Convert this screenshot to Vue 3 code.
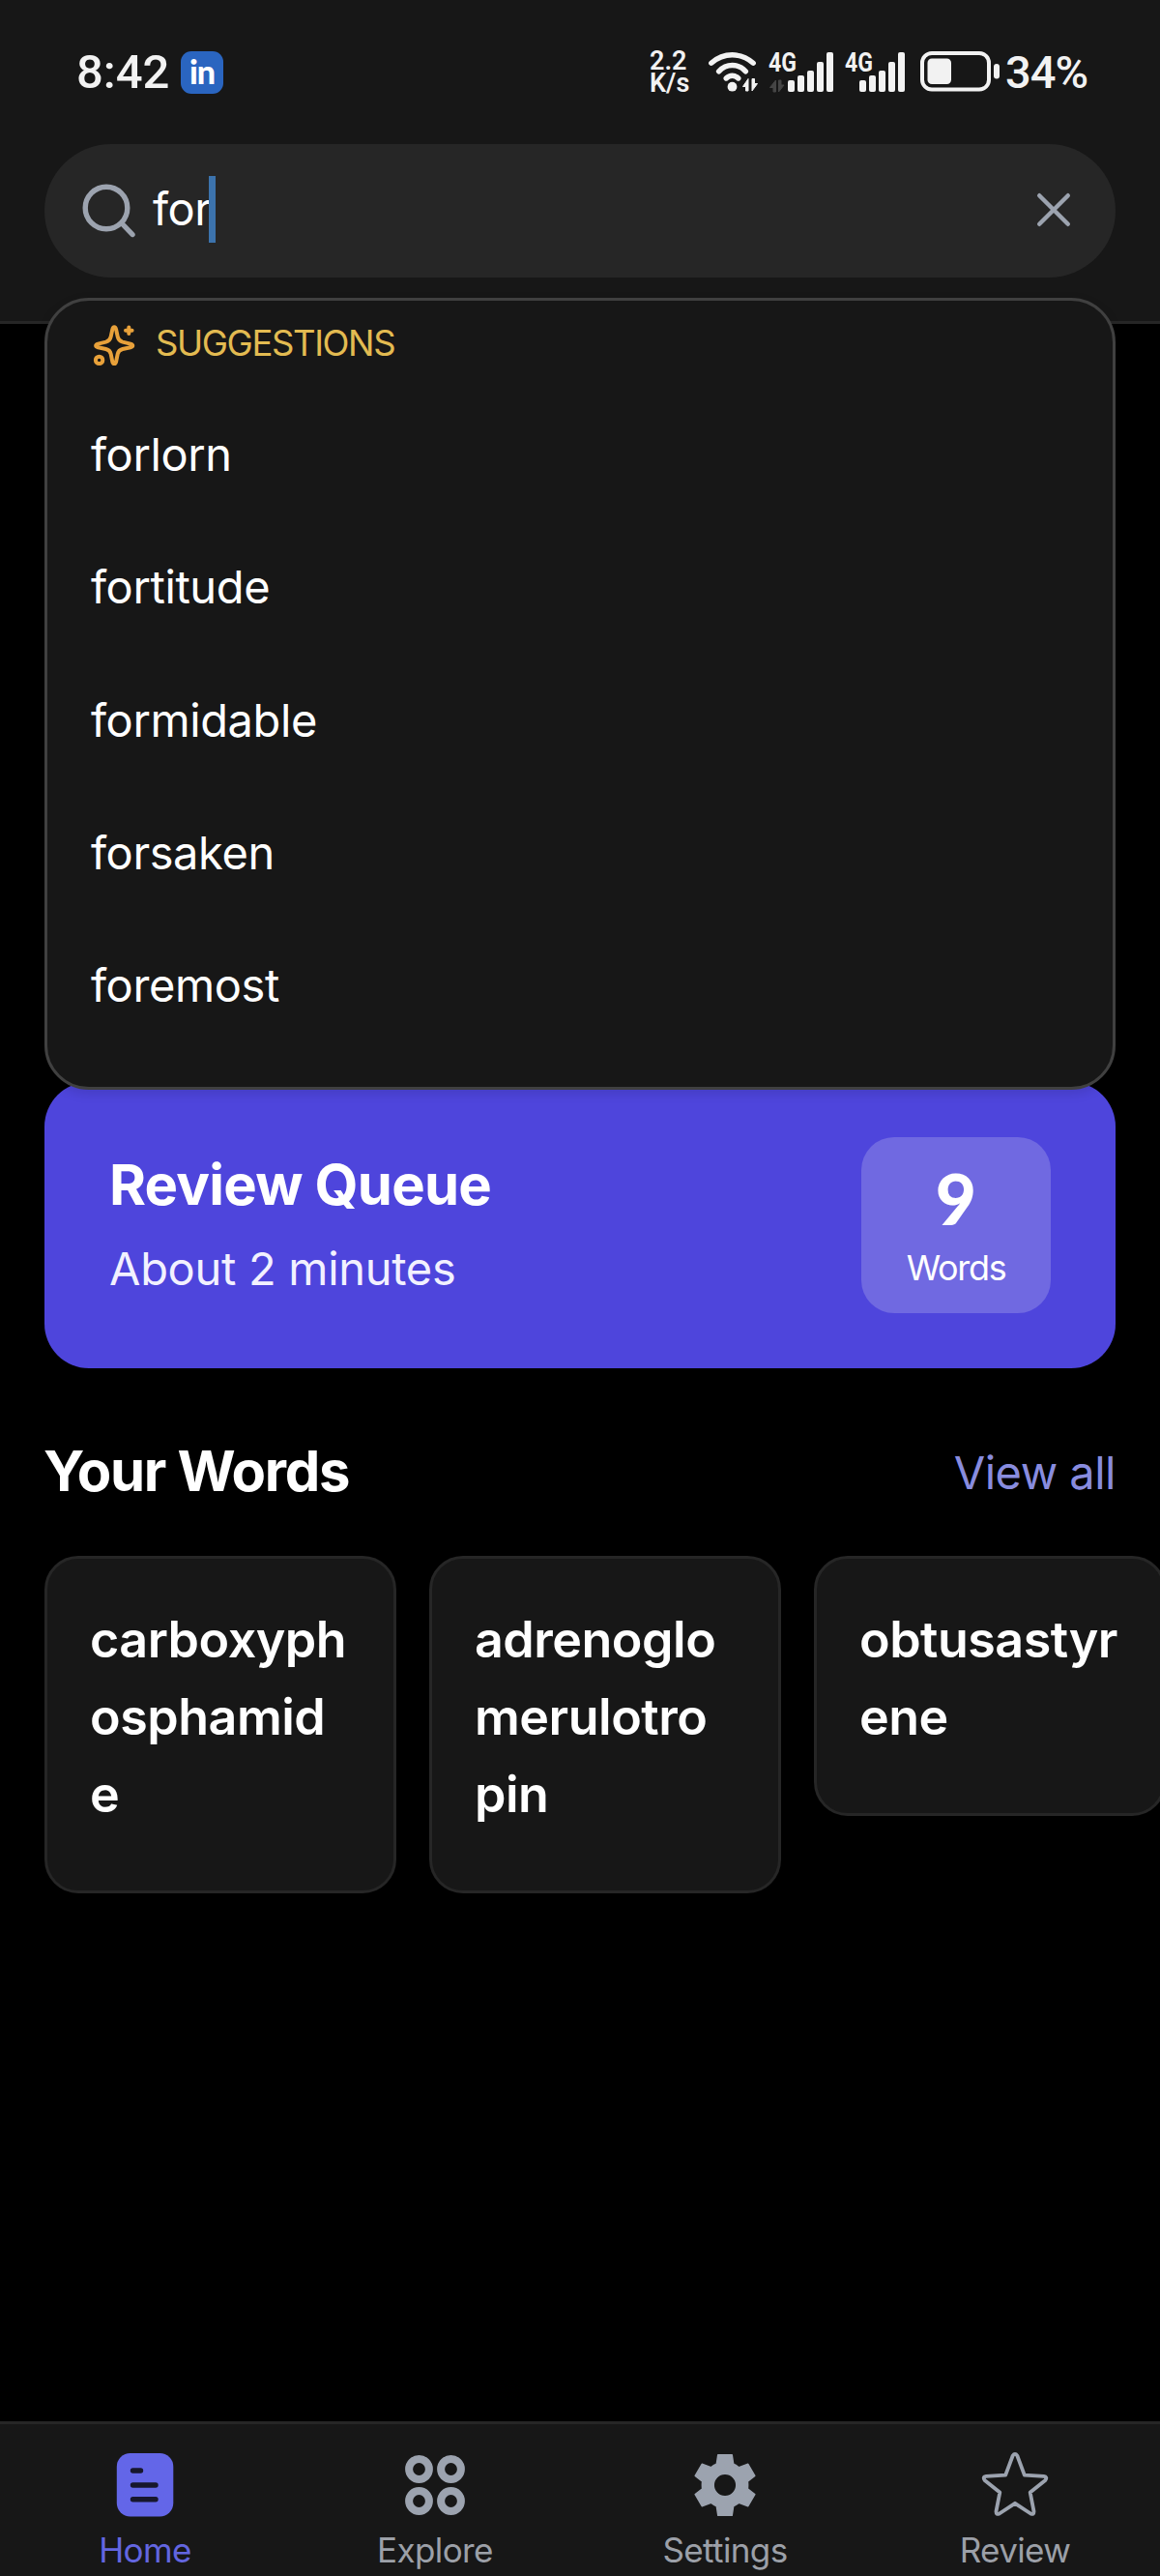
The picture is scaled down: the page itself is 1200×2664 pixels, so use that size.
<template>
  <div class="screen">
    <header class="header">
      <div class="status-bar">
        <span class="clock">8:42</span>
        <span class="linkedin">in</span>

        <div class="speed">
          <span>2.2</span>
          <span>K/s</span>
        </div>

        <svg class="wifi" width="52" height="44" viewBox="0 0 52 44">
          <g fill="none" stroke="#f2f2f2" stroke-width="5.4" stroke-linecap="round">
            <path d="M2.8 12.2Q12.5 3.8 24.5 3.8T46.2 12.2" />
            <path d="M10.6 20.8Q16.5 14.5 24.5 14.5T38.4 20.8" />
            <path d="M18.2 28Q21 25.2 24.5 25.2T30.8 28" />
          </g>
          <circle cx="24.5" cy="36.7" r="4.9" fill="#f2f2f2" />
          <path d="M41 28.5V41H38.5V36.5H35.5zM45 41V28.5H47.5V33.5H50.5z" fill="#f2f2f2" stroke="#f2f2f2" stroke-linejoin="round" />
        </svg>

        <svg class="signal" width="67" height="44" viewBox="0 0 67 44">
          <text x="0" y="21.3" textLength="29" lengthAdjust="spacingAndGlyphs">4G</text>
          <path d="M7.5 30V42H5V37.5H1.5zM10.5 42V30H13V35H16z" fill="#454545" stroke="#454545" stroke-linejoin="round" />
          <rect v-for="(bar, i) in bars" :key="i" :x="20 + i * 10" :y="bar" width="7" :height="42 - bar" rx="2" />
        </svg>

        <svg class="signal second" width="62" height="44" viewBox="0 0 62 44">
          <text x="0" y="21.3" textLength="29" lengthAdjust="spacingAndGlyphs">4G</text>
          <rect v-for="(bar, i) in bars" :key="i" :x="15 + i * 10" :y="bar" width="7" :height="42 - bar" rx="2" />
        </svg>

        <svg class="battery" width="83" height="44" viewBox="0 0 83 44">
          <rect x="2" y="2" width="69" height="37.5" rx="10" fill="none" stroke="#f2f2f2" stroke-width="4" />
          <rect x="7.5" y="7.5" width="24.5" height="26.5" rx="4.5" fill="#f2f2f2" />
          <rect x="76" y="13" width="6" height="15.5" rx="3" fill="#f2f2f2" />
        </svg>
        <span class="percent">34%</span>
      </div>

      <div class="search-wrap">
        <div class="search">
          <svg width="56" height="56" viewBox="0 0 56 56" fill="none" stroke="#9ca3af" stroke-width="5.4" stroke-linecap="round">
            <circle cx="25" cy="25" r="21.8" />
            <path d="M41 41 52 52.5" />
          </svg>
          <span class="query">{{ query }}</span>
          <span class="caret"></span>
          <svg class="clear" width="34" height="34" viewBox="0 0 34 34" fill="none" stroke="#9ca3af" stroke-width="4.4" stroke-linecap="round">
            <path d="M2.2 2.2 31.8 31.8M31.8 2.2 2.2 31.8" />
          </svg>
        </div>

        <div class="dropdown">
          <div class="dropdown-title">
            <svg width="42" height="42" viewBox="0 0 42 42" fill="none" stroke="#e8a13a" stroke-width="4" stroke-linecap="round" stroke-linejoin="round">
              <path d="M21.2 2.2C20 2.2 19.6 3.3 19.3 4.6L17.7 12.2C17.1 15 15.4 16.8 12.6 17.6L4.4 19.6C1.4 20.4 1.4 22.4 4.4 23.2L12.6 25C15.4 25.7 17.1 27.4 17.7 30.2L19.3 38C19.9 40.8 22.5 40.8 23.1 38L24.7 30.2C25.3 27.4 27 25.7 29.8 25L38 23.2C41 22.4 41 20.4 38 19.6L29.8 17.6C27 16.8 25.3 15 24.7 12.2L23.1 4.6C22.8 3.3 22.4 2.2 21.2 2.2Z" />
              <path d="M36.3 2.5V9M33 5.8H39.6" />
              <circle cx="5.6" cy="36.4" r="3.7" />
            </svg>
            <span>SUGGESTIONS</span>
          </div>
          <ul>
            <li v-for="item in suggestions" :key="item">{{ item }}</li>
          </ul>
        </div>
      </div>
    </header>

    <main class="content">
      <section class="review-card">
        <div class="review-info">
          <h2>Review Queue</h2>
          <p>About 2 minutes</p>
        </div>
        <div class="review-count">
          <strong>9</strong>
          <span>Words</span>
        </div>
      </section>

      <div class="section-head">
        <h2>Your Words</h2>
        <a class="view-all">View all</a>
      </div>

      <div class="word-list">
        <article v-for="word in words" :key="word" class="word-card">{{ word }}</article>
      </div>
    </main>

    <nav class="tab-bar">
      <div class="tab active">
        <svg width="64" height="66" viewBox="0 0 64 66">
          <rect x="2.8" y="0" width="58.5" height="65.5" rx="14" fill="#6366e8" />
          <path d="M19.5 18H27.5M19.5 33H43M19.5 47.8H43" stroke="#17172d" stroke-width="5.4" stroke-linecap="round" />
        </svg>
        <span>Home</span>
      </div>
      <div class="tab">
        <svg width="64" height="66" viewBox="0 0 64 66" fill="none" stroke="#9ca3af" stroke-width="8">
          <circle cx="15.5" cy="16.5" r="10.4" />
          <circle cx="48.5" cy="16.5" r="10.4" />
          <circle cx="15.5" cy="49.5" r="10.4" />
          <circle cx="48.5" cy="49.5" r="10.4" />
        </svg>
        <span>Explore</span>
      </div>
      <div class="tab">
        <svg width="64" height="66" viewBox="0 0 64 66">
          <path
            fill="#9ca3af"
            stroke="#9ca3af"
            stroke-width="1.5"
            stroke-linejoin="round"
            fill-rule="evenodd"
            d="M24.8 1.7H39.2L40.7 11.3Q43.8 12.6 46.5 14.8L55.8 11.3L62.8 23.3L55.4 29.2Q55.9 33 55.4 36.8L62.8 42.7L55.8 54.7L46.5 51.2Q43.8 53.4 40.7 54.7L39.2 64.3H24.8L23.3 54.7Q20.2 53.4 17.5 51.2L8.2 54.7L1.2 42.7L8.6 36.8Q8.1 33 8.6 29.2L1.2 23.3L8.2 11.3L17.5 14.8Q20.2 12.6 23.3 11.3ZM32 21.2A11.8 11.8 0 1 0 32 44.8A11.8 11.8 0 1 0 32 21.2Z"
          />
        </svg>
        <span>Settings</span>
      </div>
      <div class="tab">
        <svg width="70" height="66" viewBox="0 0 70 66" fill="none" stroke="#9ca3af" stroke-width="3.8" stroke-linejoin="round">
          <path d="M37.3 2.5Q35 -.8 32.7 2.5L25.2 22.7L5.2 23.9Q1.2 24.5 3.6 27.9L19.3 40.6L15.5 60.2Q15.3 64 18.8 62.5L35 51.8L51.2 62.5Q54.7 64 54.5 60.2L50.7 40.6L66.4 27.9Q68.8 24.5 64.8 23.9L44.8 22.7Z" />
        </svg>
        <span>Review</span>
      </div>
    </nav>
  </div>
</template>

<script setup>
import { ref } from 'vue'

const query = ref('for')

const suggestions = ['forlorn', 'fortitude', 'formidable', 'forsaken', 'foremost']

const words = ['carboxyphosphamide', 'adrenoglomerulotropin', 'obtusastyrene']

// top edge of each signal bar
const bars = [30, 25, 20, 11, 1]
</script>

<style>
body {
  background: #000;
}
</style>

<style scoped>
.screen {
  display: flex;
  flex-direction: column;
  width: 1200px;
  height: 2664px;
  overflow: hidden;
  background: #000;
  color: #fff;
  font-family: Inter, 'Noto Sans', sans-serif;
}

h2,
p,
ul {
  margin: 0;
  padding: 0;
}

svg {
  display: block;
  flex-shrink: 0;
  overflow: visible;
}

.header {
  box-sizing: border-box;
  height: 335px;
  background: #171717;
  border-bottom: 3px solid #262626;
}

/* status bar */
.status-bar {
  box-sizing: border-box;
  display: flex;
  align-items: center;
  height: 149px;
  padding-left: 79px;
  color: #f2f2f2;
  font-family: Roboto, sans-serif;
  font-weight: 500;
}

.clock {
  width: 108px;
  font-size: 49px;
}

.linkedin {
  width: 44px;
  height: 44px;
  border-radius: 11px;
  background: #2a65c0;
  color: #fff;
  font-family: Lato, sans-serif;
  font-size: 34px;
  font-weight: 900;
  letter-spacing: -1px;
  line-height: 41px;
  text-align: center;
}

.speed {
  display: flex;
  flex-direction: column;
  width: 61px;
  margin-left: 441px;
  font-size: 27px;
  font-weight: 600;
  line-height: 22.5px;
}

.signal {
  margin-left: 10px;
  fill: #f2f2f2;
}

.signal.second {
  margin-left: 12px;
}

.signal text {
  font-size: 27px;
  font-weight: 700;
}

.battery {
  margin-left: 16px;
}

.percent {
  margin-left: 5px;
  font-size: 47px;
  letter-spacing: -1px;
}

/* search */
.search-wrap {
  position: relative;
  margin: 0 46px;
}

.search {
  box-sizing: border-box;
  display: flex;
  align-items: center;
  height: 138px;
  padding: 0 47px 0 39px;
  border-radius: 69px;
  background: #262626;
}

.query {
  margin: 0 -2px 4px 17px;
  font-size: 47px;
  line-height: 60px;
  letter-spacing: -0.5px;
}

.caret {
  width: 7px;
  height: 69px;
  margin-bottom: 3px;
  background: #3c73ad;
}

.clear {
  margin-bottom: 2px;
  margin-left: auto;
}

.dropdown {
  position: absolute;
  top: 159px;
  left: 0;
  right: 0;
  z-index: 10;
  box-sizing: border-box;
  height: 819px;
  border: 3px solid #404040;
  border-radius: 46px;
  background: #171717;
  box-shadow: 0 4px 12px rgba(0, 0, 0, 0.12);
}

.dropdown-title {
  display: flex;
  align-items: center;
  gap: 22px;
  height: 91px;
  padding-left: 48px;
  color: #e3bb51;
  font-size: 36.5px;
  letter-spacing: -1.4px;
}

.dropdown-title span {
  padding-bottom: 4px;
}

.dropdown li {
  height: 137.25px;
  padding-left: 45px;
  font-size: 47px;
  line-height: 136px;
  letter-spacing: -0.4px;
  list-style: none;
}

/* content */
.content {
  padding: 784px 46px 0;
}

.review-card {
  box-sizing: border-box;
  display: flex;
  justify-content: space-between;
  align-items: center;
  height: 296px;
  padding: 0 67px 0 67px;
  border-radius: 46px;
  background: #4e45dc;
}

.review-info h2 {
  font-size: 58px;
  font-weight: 650;
  line-height: 80px;
  letter-spacing: -0.8px;
}

.review-info p {
  margin: 12px 0 2px;
  color: #f2f1ff;
  font-size: 47px;
  line-height: 70px;
  letter-spacing: -0.3px;
}

.review-count {
  box-sizing: border-box;
  display: flex;
  flex-direction: column;
  align-items: center;
  gap: 12px;
  width: 196px;
  height: 182px;
  padding-top: 23px;
  border-radius: 34px;
  background: #7069e1;
}

.review-count strong {
  font-family: Lato, sans-serif;
  font-size: 73px;
  font-weight: 900;
  line-height: 80px;
}

.review-count span {
  font-size: 36px;
  line-height: 40px;
  letter-spacing: -1.3px;
}

.section-head {
  display: flex;
  justify-content: space-between;
  align-items: center;
  height: 76px;
  margin: 68px 0 50px;
}

.section-head h2 {
  margin-left: -1px;
  font-size: 58px;
  font-weight: 650;
  letter-spacing: -1.3px;
}

.view-all {
  padding-top: 3px;
  color: #888cdf;
  font-size: 47px;
  letter-spacing: -0.5px;
}

.word-list {
  display: flex;
  align-items: flex-start;
  gap: 34px;
}

.word-card {
  box-sizing: border-box;
  flex: 0 0 364px;
  padding: 44px 44px 59px;
  border: 3px solid #262626;
  border-radius: 35px;
  background: #171717;
  font-size: 52px;
  font-weight: 630;
  line-height: 80px;
  letter-spacing: -0.5px;
  word-break: break-all;
}

/* bottom tabs */
.tab-bar {
  box-sizing: border-box;
  display: flex;
  height: 160px;
  margin-top: auto;
  border-top: 3px solid #262626;
  background: #171717;
}

.tab {
  display: flex;
  flex: 1;
  flex-direction: column;
  align-items: center;
  gap: 13px;
  padding-top: 30px;
  color: #9ca0a8;
  font-size: 35px;
  line-height: 42px;
  letter-spacing: -0.6px;
}

.tab.active {
  color: #6366e0;
}
</style>
